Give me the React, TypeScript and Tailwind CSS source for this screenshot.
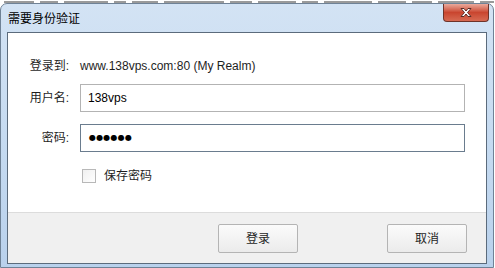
const font = { fontFamily: '"Liberation Sans", "Noto Sans CJK SC", sans-serif' };

const CloseGlyph = () => (
  <svg width="14" height="11" viewBox="0 0 14 11">
    <path
      d="M2 1.5h3l2 2.5 2-2.5h3l-3.5 4 3.5 4h-3l-2-2.5-2 2.5h-3l3.5-4z"
      fill="#fff"
      stroke="#5a2a24"
      strokeWidth="1"
      strokeLinejoin="round"
    />
  </svg>
);

const Field = ({ label, children, focused }: { label: string; children: React.ReactNode; focused?: boolean }) => (
  <div className="flex items-center">
    <div className="w-[61px] text-right text-[12px] text-[#1e1e1e]">{label}</div>
    <div
      className={`ml-[11px] flex h-[28px] w-[385px] items-center border bg-white pl-[7px] text-[12px] text-black ${
        focused ? 'border-[#6a7c8e]' : 'border-[#b3b3b3]'
      }`}
    >
      {children}
    </div>
  </div>
);

const DialogButton = ({ children }: { children: React.ReactNode }) => (
  <div className="flex h-[29px] w-[80px] items-center justify-center rounded-[2px] border border-[#b4b4b4] bg-gradient-to-b from-[#fbfbfb] to-[#ebebeb] text-[12px] text-[#1e1e1e]">
    {children}
  </div>
);

// bits of the page behind the dialog, peeking out above it
const behind = [30, 18, 44, 12, 26, 60, 22, 38, 16, 48, 28, 20, 36, 14];

export default function App() {
  return (
    <div className="flex h-[268px] w-[495px] flex-col overflow-hidden bg-white" style={font}>
      <div className="flex h-[3px] items-end gap-[6px] pl-[4px]">
        {behind.map((w, i) => (
          <div key={i} className="h-[2px] bg-[#9a9a9a]" style={{ width: w }} />
        ))}
      </div>
      <div className="mr-[1px] flex flex-1 flex-col rounded-t-[7px] border border-[#6f8296] bg-gradient-to-b from-[#d3e3f4] via-[#c6dbf1] to-[#b9d1ec]">
        <div className="flex h-[28px] items-start justify-between">
          <div className="ml-[7px] mt-[6px] text-[12px] text-black">需要身份验证</div>
          <div className="mr-[4px] flex h-[18px] w-[46px] items-center justify-center rounded-b-[4px] border border-t-0 border-[#6e3329] bg-gradient-to-b from-[#e9a99c] via-[#c9452f] to-[#d66a52]">
            <CloseGlyph />
          </div>
        </div>
        <div className="mx-[6px] flex h-[232px] flex-col border border-[#5b6b7c]">
          <div className="flex h-[179px] flex-col bg-white pt-[23px]">
            <div className="flex h-[20px] items-center">
              <div className="w-[61px] text-right text-[12px] text-[#1e1e1e]">登录到:</div>
              <div className="ml-[11px] text-[12px] text-[#1e1e1e]">www.138vps.com:80 (My Realm)</div>
            </div>
            <div className="mt-[8px]">
              <Field label="用户名:">138vps</Field>
            </div>
            <div className="mt-[12px]">
              <Field label="密码:" focused>
                <span className="pl-[1px] font-['DejaVu_Sans',sans-serif] text-[8px] tracking-[0.2px]">●●●●●●</span>
              </Field>
            </div>
            <div className="ml-[74px] mt-[15px] flex items-center gap-[8px]">
              <div className="size-[14px] border border-[#b8b8b8] bg-gradient-to-br from-[#f0f0f0] to-white" />
              <span className="text-[12px] text-[#1e1e1e]">保存密码</span>
            </div>
          </div>
          <div className="flex flex-1 items-start border-t border-[#dcdcdc] bg-[#f0f0f0] pt-[11px]">
            <div className="ml-[210px]">
              <DialogButton>登录</DialogButton>
            </div>
            <div className="ml-[89px]">
              <DialogButton>取消</DialogButton>
            </div>
          </div>
        </div>
      </div>
    </div>
  );
}
